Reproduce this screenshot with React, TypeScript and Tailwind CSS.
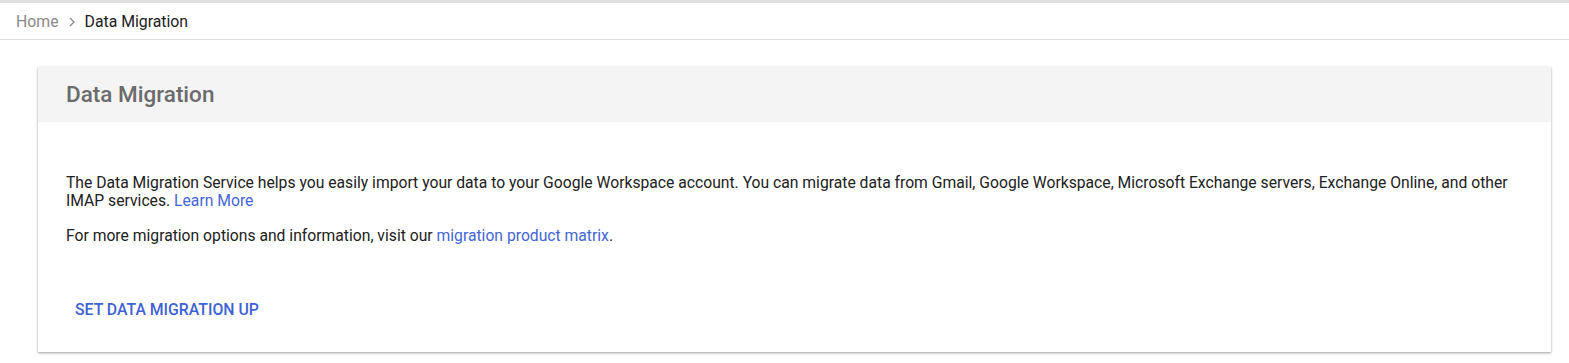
export default function App() {
  return (
    <div className="min-h-[363px] bg-white font-['Roboto',sans-serif] text-[#212121]">
      <div className="h-[3px] bg-[#e0e0e0]" />
      <nav className="flex h-[37px] items-center border-b border-[#e0e0e0] px-4 pt-[2px] text-[15.8px]">
        <span className="text-[#8a8a8a]">Home</span>
        <span className="ml-[9px] mr-[9px] text-[#8a8a8a]">
          <svg width="8" height="10" viewBox="0 0 8 10" fill="none">
            <path d="M2 1l4 4-4 4" stroke="#8a8a8a" strokeWidth="1.3" />
          </svg>
        </span>
        <span className="text-[#212121]">Data Migration</span>
      </nav>
      <div className="pl-[38px] pr-[18px] pt-[27px] pb-[10px]">
        <section className="bg-white shadow-[0_1px_2px_rgba(0,0,0,0.3),0_1px_4px_rgba(0,0,0,0.1)]">
          <header className="flex h-[55px] items-center bg-[#f4f4f4] px-[28px]">
            <h1 className="text-[22.5px] font-medium text-[#6b6b6b]">Data Migration</h1>
          </header>
          <div className="px-[28px] pt-[52px] text-[15.7px] leading-[18px]">
            <p>
              The Data Migration Service helps you easily import your data to your Google Workspace account. You can migrate data from Gmail, Google Workspace, Microsoft Exchange servers, Exchange Online, and other IMAP services.{' '}
              <a className="text-[#4466d4]">Learn More</a>
            </p>
            <p className="mt-[17px]">
              For more migration options and information, visit our{' '}
              <a className="text-[#4466d4]">migration product matrix</a>.
            </p>
          </div>
          <div className="px-[28px] pt-[49px] pb-[26px]">
            <button className="px-[9px] py-[6px] text-[15.8px] font-medium uppercase leading-[20px] text-[#3d63d3]">
              Set data migration up
            </button>
          </div>
        </section>
      </div>
    </div>
  );
}
